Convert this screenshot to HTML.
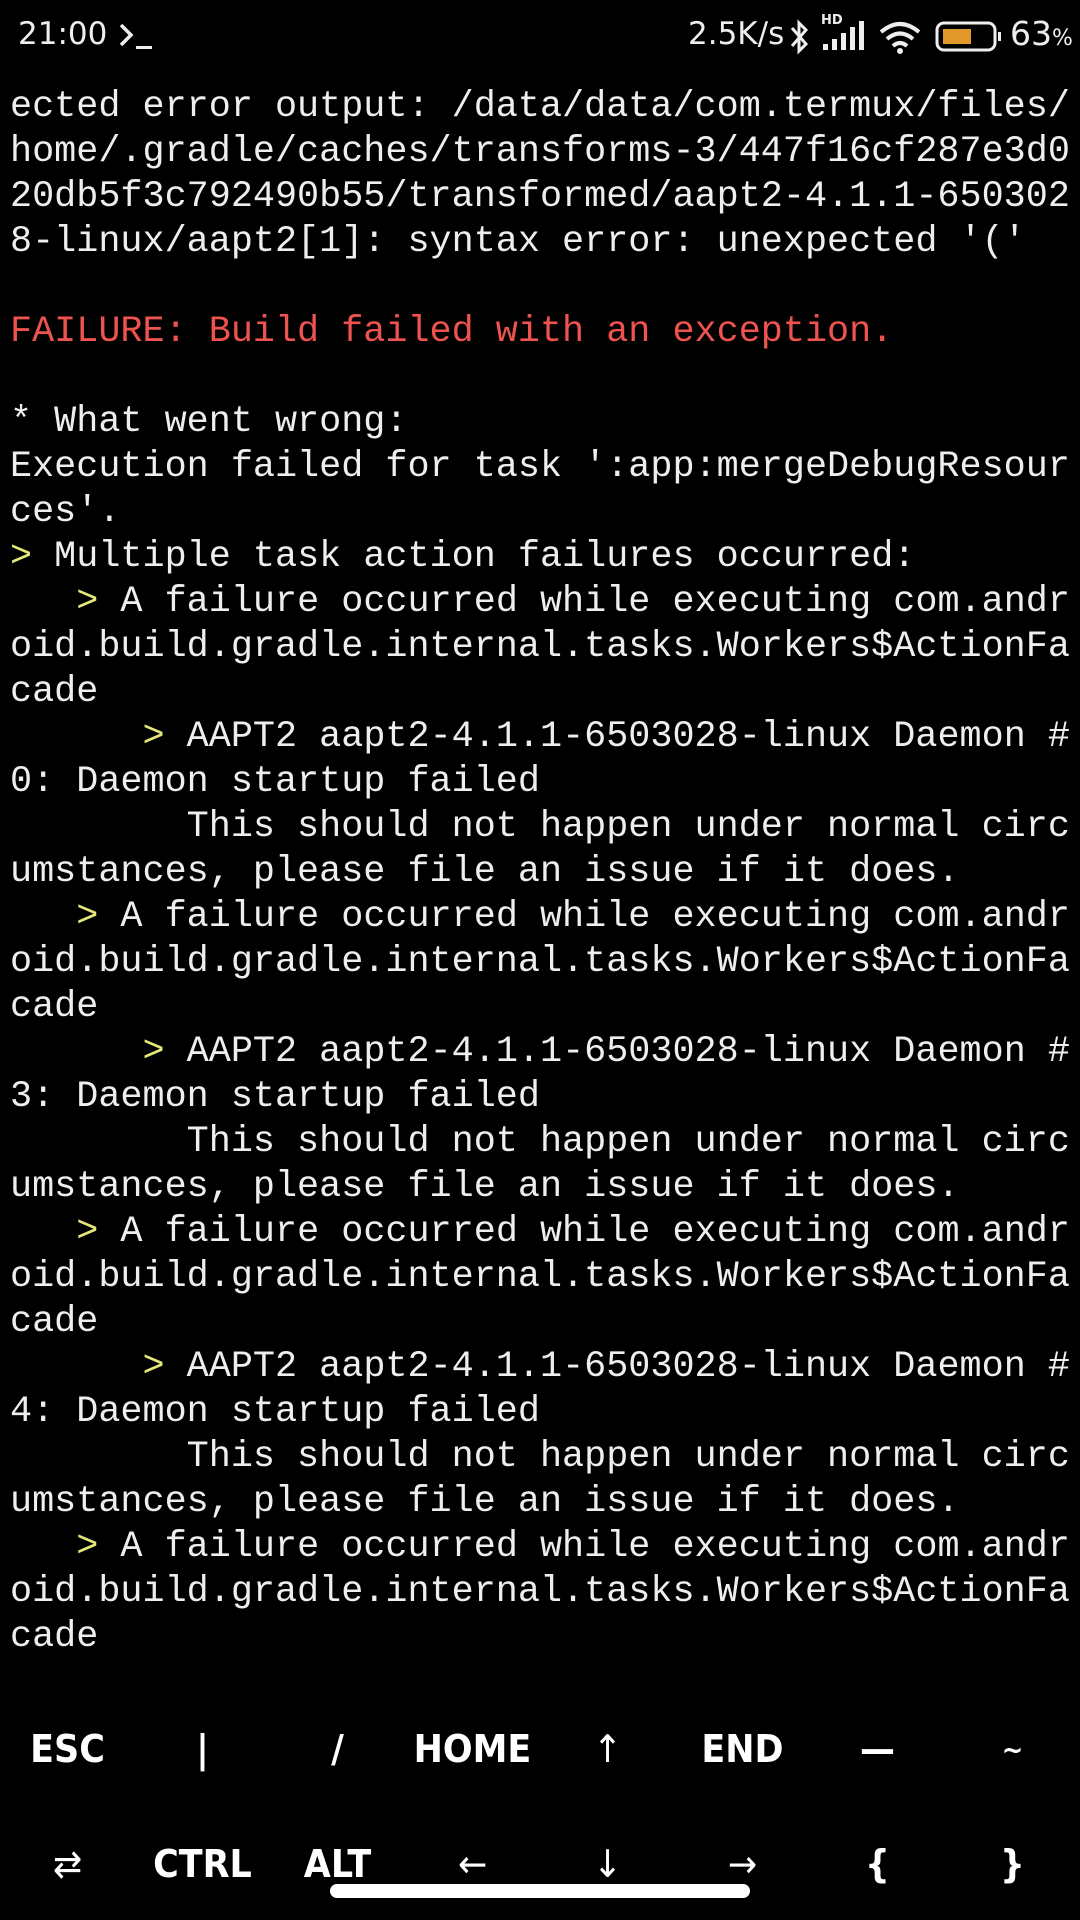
<!DOCTYPE html>
<html><head><meta charset="utf-8"><style>
html,body{margin:0;padding:0;background:#000;}
body{width:1080px;height:1920px;position:relative;overflow:hidden;color:#eee;}
.sb{position:absolute;top:0;left:0;width:1080px;height:75px;font-family:"DejaVu Sans","Liberation Sans",sans-serif;color:#eee;}
.term{position:absolute;left:10px;top:85px;font-family:"Liberation Mono",monospace;font-size:36.8px;line-height:45px;white-space:pre;color:#eee;}
.r{color:#ef5350}.y{color:#e6e77a}
.keys{position:absolute;left:0;width:1080px;font-family:"DejaVu Sans","Liberation Sans",sans-serif;color:#fff;font-size:38px;font-weight:bold;}
.keys div{position:absolute;width:135px;text-align:center;transform:scaleX(0.92);}
</style></head><body>
<div class="sb">
<div style="position:absolute;left:18px;top:16px;font-size:31px;">21:00</div>
<svg style="position:absolute;left:118px;top:22px" width="40" height="30"><path d="M3 3 L13 13 L3 23" stroke="#eee" stroke-width="3.5" fill="none"/><rect x="18" y="24" width="16" height="3" fill="#eee"/></svg>
<div style="position:absolute;left:688px;top:16px;font-size:31px;">2.5K/s</div>
<svg style="position:absolute;left:786px;top:18px" width="28" height="38"><path d="M6 10 L20 26 L13 33 L13 5 L20 12 L6 28" stroke="#eee" stroke-width="3" fill="none"/></svg>
<div style="position:absolute;left:821px;top:13px;font-size:13px;font-weight:bold;">HD</div>
<svg style="position:absolute;left:822px;top:20px" width="44" height="32"><rect x="1" y="24" width="5" height="6" fill="#eee"/><rect x="10" y="19" width="5" height="11" fill="#eee"/><rect x="19" y="13" width="5" height="17" fill="#eee"/><rect x="28" y="7" width="5" height="23" fill="#eee"/><rect x="37" y="1" width="5" height="29" fill="#eee"/></svg>
<svg style="position:absolute;left:878px;top:20px" width="48" height="36"><path d="M3 12 Q22 -4 41 12" stroke="#eee" stroke-width="4" fill="none"/><path d="M9 19 Q22 8 35 19" stroke="#eee" stroke-width="4" fill="none"/><path d="M15 26 Q22 20 29 26" stroke="#eee" stroke-width="4" fill="none"/><circle cx="22" cy="31" r="3" fill="#eee"/></svg>
<svg style="position:absolute;left:935px;top:21px" width="70" height="32"><rect x="2" y="2" width="58" height="27" rx="7" stroke="#eee" stroke-width="3" fill="none"/><rect x="8" y="8" width="28" height="15" fill="#e0982a"/><rect x="63" y="11" width="3" height="9" fill="#eee"/></svg>
<div style="position:absolute;left:1010px;top:14px;font-size:33px;">63<span style="font-size:22px">%</span></div>
</div>
<div class="term">ected error output: /data/data/com.termux/files/
home/.gradle/caches/transforms-3/447f16cf287e3d0
20db5f3c792490b55/transformed/aapt2-4.1.1-650302
8-linux/aapt2[1]: syntax error: unexpected '('

<span class="r">FAILURE: Build failed with an exception.</span>

* What went wrong:
Execution failed for task ':app:mergeDebugResour
ces'.
<span class="y">&gt;</span> Multiple task action failures occurred:
   <span class="y">&gt;</span> A failure occurred while executing com.andr
oid.build.gradle.internal.tasks.Workers$ActionFa
cade
      <span class="y">&gt;</span> AAPT2 aapt2-4.1.1-6503028-linux Daemon #
0: Daemon startup failed
        This should not happen under normal circ
umstances, please file an issue if it does.
   <span class="y">&gt;</span> A failure occurred while executing com.andr
oid.build.gradle.internal.tasks.Workers$ActionFa
cade
      <span class="y">&gt;</span> AAPT2 aapt2-4.1.1-6503028-linux Daemon #
3: Daemon startup failed
        This should not happen under normal circ
umstances, please file an issue if it does.
   <span class="y">&gt;</span> A failure occurred while executing com.andr
oid.build.gradle.internal.tasks.Workers$ActionFa
cade
      <span class="y">&gt;</span> AAPT2 aapt2-4.1.1-6503028-linux Daemon #
4: Daemon startup failed
        This should not happen under normal circ
umstances, please file an issue if it does.
   <span class="y">&gt;</span> A failure occurred while executing com.andr
oid.build.gradle.internal.tasks.Workers$ActionFa
cade</div>
<div class="keys" style="top:1727px;">
<div style="left:0">ESC</div><div style="left:135px">|</div><div style="left:270px">/</div><div style="left:405px">HOME</div><div style="left:540px;font-weight:normal">↑</div><div style="left:675px">END</div><div style="left:810px">—</div><div style="left:945px;font-size:28px;top:6px">~</div>
</div>
<div class="keys" style="top:1842px;">
<div style="left:0;font-weight:normal">⇄</div><div style="left:135px">CTRL</div><div style="left:270px">ALT</div><div style="left:405px;font-weight:normal">←</div><div style="left:540px;font-weight:normal">↓</div><div style="left:675px;font-weight:normal">→</div><div style="left:810px">{</div><div style="left:945px">}</div>
</div>
<div style="position:absolute;left:330px;top:1884px;width:420px;height:14px;border-radius:7px;background:#fff;"></div>
</body></html>
